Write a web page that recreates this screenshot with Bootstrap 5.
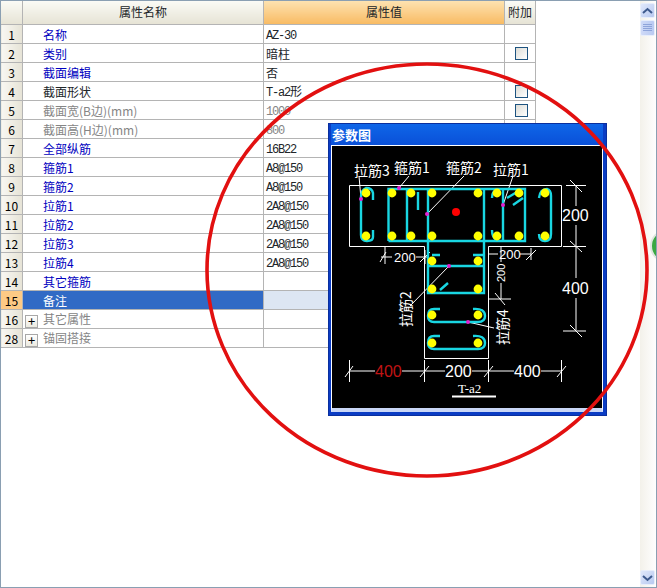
<!DOCTYPE html>
<html lang="zh"><head><meta charset="utf-8"><title>属性</title>
<link href="https://cdn.jsdelivr.net/npm/bootstrap@5.3.0/dist/css/bootstrap.min.css" rel="stylesheet">
<style>
html,body{margin:0;height:588px;overflow:hidden;background:#fff}
.frame{width:657px;height:588px;border:1px solid #8a9fb2;font:12px/14px "Noto Sans CJK SC","Liberation Sans",sans-serif;color:#000;background:#fff}
.grid-area{width:638px}
.ptable{table-layout:fixed;width:535px;margin:0 0 0 -1px;border-collapse:collapse;--bs-table-bg:transparent;--bs-border-color:#b4b4b4}
.ptable td,.ptable th{height:19px;padding:2px 0 0 2px;border:1px solid #b4b4b4;white-space:nowrap;overflow:hidden;font-weight:400;vertical-align:middle;line-height:14px}
.ptable thead th{height:23px;padding:0;text-align:center;font-size:12px;background:linear-gradient(#fafaf5,#e6e3d5);border-top:0}
.ptable thead th.sel{background:linear-gradient(#fde2b0,#f8bb64)}
.ptable .rn{padding:2px 0 0 0;text-align:center;color:#000;background:linear-gradient(90deg,#f8f7f2,#e6e3d6)}
.ptable .rn.cur{background:#fdca85}
.ptable .nm{padding-left:20px}
.ptable .nm.kid{padding-left:2px}
.ptable .nblue{color:#0000c0}
.ptable .ngray{color:#858585}
.ptable .picked{background:#316ac5;color:#fff}
.ptable .pale{background:#dde6f3}
.lat{font-family:"Liberation Mono",monospace;letter-spacing:-1.2px}
.ptick{display:block;width:13px;height:13px;margin:0 auto;border:1px solid #1d5380;background:linear-gradient(135deg,#dcdcd6,#fff)}
.plus{display:inline-block;width:13px;height:13px;margin-right:5px;border:1px solid #a8a8a8;background:linear-gradient(#fff,#eceae0);color:#000;line-height:10px;text-align:center;vertical-align:-2px;font-size:13px}
.sbar{width:16px;margin-left:auto;background:linear-gradient(90deg,#f3f1ea,#fefefe)}
.sbtn{width:15px;height:15px;margin:2px 0 0 0;border:1px solid #e8eefb;border-radius:2px;background:linear-gradient(135deg,#e0e8fb,#b8c9f0)}
.sthumb{width:15px;height:16px;margin-top:2px;border:1px solid #e8eefb;border-radius:2px;background:linear-gradient(90deg,#cfdaf7,#b9caf2)}
.sdown{margin:0 0 2px 0}
.pwin{position:absolute;left:327px;top:122px;width:279px;height:293px;background:#0a3cc4;border:1px solid #0a2f9e;padding:0 3px 3px 2px}
.pwin-title{height:21px;color:#fff;font-weight:700;font-size:13px;line-height:22px;padding-left:1px;background:linear-gradient(#0f66e8,#0a50d8)}
.pwin-body{border:1px solid #fff;border-width:1px 1px 4px 1px;border-bottom-color:#c9d6f6;background:#000;height:267px}
.pwin-body svg{display:block}
.dtxt{fill:#fff;font-family:"Noto Sans CJK SC","Liberation Sans",sans-serif;font-size:14px}
.dnum{fill:#fff;font-family:"Liberation Sans",sans-serif;font-size:16px}
.overlay{position:absolute;left:-1px;top:-1px;pointer-events:none}
.gball{position:absolute;left:649px;top:229px;width:30px;height:32px;border-radius:50%;background:#3aa843;border:2px solid #dfe6df}
</style></head>
<body>
<div class="frame position-relative d-flex overflow-hidden">
<div class="grid-area">
<table class="table ptable">
<colgroup><col style="width:22px"><col style="width:241px"><col style="width:241px"><col style="width:31px"></colgroup>
<thead><tr><th></th><th>属性名称</th><th class="sel">属性值</th><th>附加</th></tr></thead>
<tbody>
<tr><td class="rn">1</td><td class="nm nblue">名称</td><td><span class="lat">AZ-30</span></td><td></td></tr>
<tr><td class="rn">2</td><td class="nm nblue">类别</td><td>暗柱</td><td><span class="ptick"></span></td></tr>
<tr><td class="rn">3</td><td class="nm nblue">截面编辑</td><td>否</td><td></td></tr>
<tr><td class="rn">4</td><td class="nm">截面形状</td><td><span class="lat">T-a2</span>形</td><td><span class="ptick"></span></td></tr>
<tr><td class="rn">5</td><td class="nm ngray">截面宽(B边)(mm)</td><td class="ngray"><span class="lat">1000</span></td><td><span class="ptick"></span></td></tr>
<tr><td class="rn">6</td><td class="nm ngray">截面高(H边)(mm)</td><td class="ngray"><span class="lat">800</span></td><td></td></tr>
<tr><td class="rn">7</td><td class="nm nblue">全部纵筋</td><td><span class="lat">16B22</span></td><td></td></tr>
<tr><td class="rn">8</td><td class="nm nblue">箍筋1</td><td><span class="lat">A8@150</span></td><td></td></tr>
<tr><td class="rn">9</td><td class="nm nblue">箍筋2</td><td><span class="lat">A8@150</span></td><td></td></tr>
<tr><td class="rn">10</td><td class="nm nblue">拉筋1</td><td><span class="lat">2A8@150</span></td><td></td></tr>
<tr><td class="rn">11</td><td class="nm nblue">拉筋2</td><td><span class="lat">2A8@150</span></td><td></td></tr>
<tr><td class="rn">12</td><td class="nm nblue">拉筋3</td><td><span class="lat">2A8@150</span></td><td></td></tr>
<tr><td class="rn">13</td><td class="nm nblue">拉筋4</td><td><span class="lat">2A8@150</span></td><td></td></tr>
<tr><td class="rn">14</td><td class="nm nblue">其它箍筋</td><td></td><td></td></tr>
<tr><td class="rn cur">15</td><td class="nm picked">备注</td><td class="pale"></td><td class="pale"></td></tr>
<tr><td class="rn">16</td><td class="nm kid ngray"><span class="plus">+</span>其它属性</td><td></td><td></td></tr>
<tr><td class="rn">28</td><td class="nm kid ngray"><span class="plus">+</span>锚固搭接</td><td></td><td></td></tr>
</tbody></table>
</div>
<div class="sbar d-flex flex-column">
<div class="sbtn d-flex align-items-center justify-content-center"><svg width="11" height="8" viewBox="0 0 11 8"><path d="M1 6L5.5 2L10 6" fill="none" stroke="#3e5a8e" stroke-width="2"/></svg></div>
<div class="sthumb d-flex flex-column align-items-center justify-content-center gap-0"><svg width="9" height="8" viewBox="0 0 9 8"><path d="M0 .5H9M0 2.5H9M0 4.5H9M0 6.5H9" stroke="#8ea4da"/></svg></div>
<div class="sbtn sdown mt-auto d-flex align-items-center justify-content-center"><svg width="11" height="8" viewBox="0 0 11 8"><path d="M1 2L5.5 6L10 2" fill="none" stroke="#3e5a8e" stroke-width="2"/></svg></div>
</div>
<div class="gball"></div>

<div class="pwin">
<div class="pwin-title">参数图</div>
<div class="pwin-body">
<svg width="270" height="262" viewBox="332 146 270 262">
<g fill="none" stroke="#fff" stroke-width="1">
<path d="M349.5 185.5H561.5V246.5H488.5V358.5H424.5V246.5H349.5Z"/>
<path d="M359 176L361 199M409 176L399 188M464 176L427 214M513 176L503 205M449 266L410 306M468 322L494 328"/>
<path d="M566 185.5H586M576 185V206M576 225V278M576 298V330M563 331H586M563 246.5H586M570 180L582 192M570 241L582 252M570 325L582 337"/>
<path d="M381 257H392M416 257H427M385 246V264M425 250V264M380 262L386 252M420 262L430 252"/>
<path d="M488 254H498M520 254H531M531 248V260M526 260L536 250"/>
<path d="M501 247V262M501 283V299M488 299H511M495 293L505 305"/>
<path d="M349.5 360V382M424.5 360V382M488.5 360V382M561.5 360V382M350 371H375M402 371H445M472 371H514M541 371H562M345 377L353 366M420 377L429 366M484 377L493 366M557 377L566 366"/>
</g>
<path d="M452 396.5H496" stroke="#fff" stroke-width="2"/>
<g fill="none" stroke="#19d6e2" stroke-width="2.4">
<path d="M373 200V193Q372 188 366 188Q361 190 361 197V235Q361 241 367 241Q373 241 373 237V230"/>
<path d="M388.5 241V189H525V241H388.5M407 241V189M418 192V210M428 189V241M484 189V241"/>
<path d="M492 198Q492 191 497 190M492 230Q492 238 497 240M503 189V241"/>
<path d="M507 198L517 192M513 205L523 198"/>
<path d="M539 198Q540 189 547 189Q551 190 551 196V234Q551 241 545 241Q539 241 539 234"/>
<path d="M428 241V293H484V241M428 266H484M440 290L448 283M432 255H440M473 255H484"/>
<path d="M440 309H434Q428 309 428 316Q428 322 434 322H478Q485 322 485 316Q485 308 473 309"/>
<path d="M440 336H434Q428 336 428 343Q428 349 434 349H478Q485 349 485 343Q485 335 473 336"/>
</g>
<g fill="#ff0">
<circle cx="366" cy="193" r="4.4"/><circle cx="366" cy="236" r="4.4"/><circle cx="392" cy="193" r="4.4"/><circle cx="392" cy="236" r="4.4"/><circle cx="411" cy="193" r="4.4"/><circle cx="411" cy="236" r="4.4"/><circle cx="432" cy="193" r="4.4"/><circle cx="432" cy="236" r="4.4"/><circle cx="478" cy="193" r="4.4"/><circle cx="478" cy="236" r="4.4"/><circle cx="497" cy="193" r="4.4"/><circle cx="497" cy="236" r="4.4"/><circle cx="519" cy="193" r="4.4"/><circle cx="519" cy="236" r="4.4"/><circle cx="545" cy="193" r="4.4"/><circle cx="545" cy="236" r="4.4"/>
<circle cx="432" cy="261" r="4.4"/><circle cx="478" cy="261" r="4.4"/><circle cx="432" cy="289" r="4.4"/><circle cx="478" cy="289" r="4.4"/><circle cx="432" cy="315" r="4.4"/><circle cx="478" cy="315" r="4.4"/><circle cx="432" cy="343" r="4.4"/><circle cx="478" cy="343" r="4.4"/>
</g>
<circle cx="456" cy="212" r="4" fill="#f00"/>
<g fill="#e61fd0"><circle cx="361" cy="199" r="2"/><circle cx="399" cy="188" r="2"/><circle cx="427" cy="214" r="2"/><circle cx="449" cy="266" r="2"/><circle cx="503" cy="205" r="2"/><circle cx="468" cy="322" r="2"/></g>
<text class="dtxt" x="354" y="176">拉筋3</text>
<text class="dtxt" x="394" y="173">箍筋1</text>
<text class="dtxt" x="446" y="173">箍筋2</text>
<text class="dtxt" x="493" y="175">拉筋1</text>
<text class="dtxt" transform="translate(411 327) rotate(-90)">拉筋2</text>
<text class="dtxt" transform="translate(508 345) rotate(-90)">拉筋4</text>
<text class="dnum" x="562" y="221">200</text>
<text class="dnum" x="562" y="294">400</text>
<text class="dnum" x="394" y="262" style="font-size:13px">200</text>
<text class="dnum" x="499" y="259" style="font-size:13px">200</text>
<text class="dnum" transform="translate(505 282) rotate(-90)" style="font-size:11px">200</text>
<text class="dnum" x="375" y="377" style="fill:#c01414">400</text>
<text class="dnum" x="445" y="377">200</text>
<text class="dnum" x="514" y="377">400</text>
<text class="dnum" x="458" y="393" style="font-size:13px;font-family:'Liberation Serif',serif">T-a2</text>
</svg>
</div>
</div>

<svg class="overlay" width="657" height="588"><ellipse cx="427" cy="270" rx="220" ry="206" fill="none" stroke="#e21010" stroke-width="3.6"/></svg>
</div>
<script src="https://cdn.jsdelivr.net/npm/bootstrap@5.3.0/dist/js/bootstrap.bundle.min.js"></script>
</body></html>
